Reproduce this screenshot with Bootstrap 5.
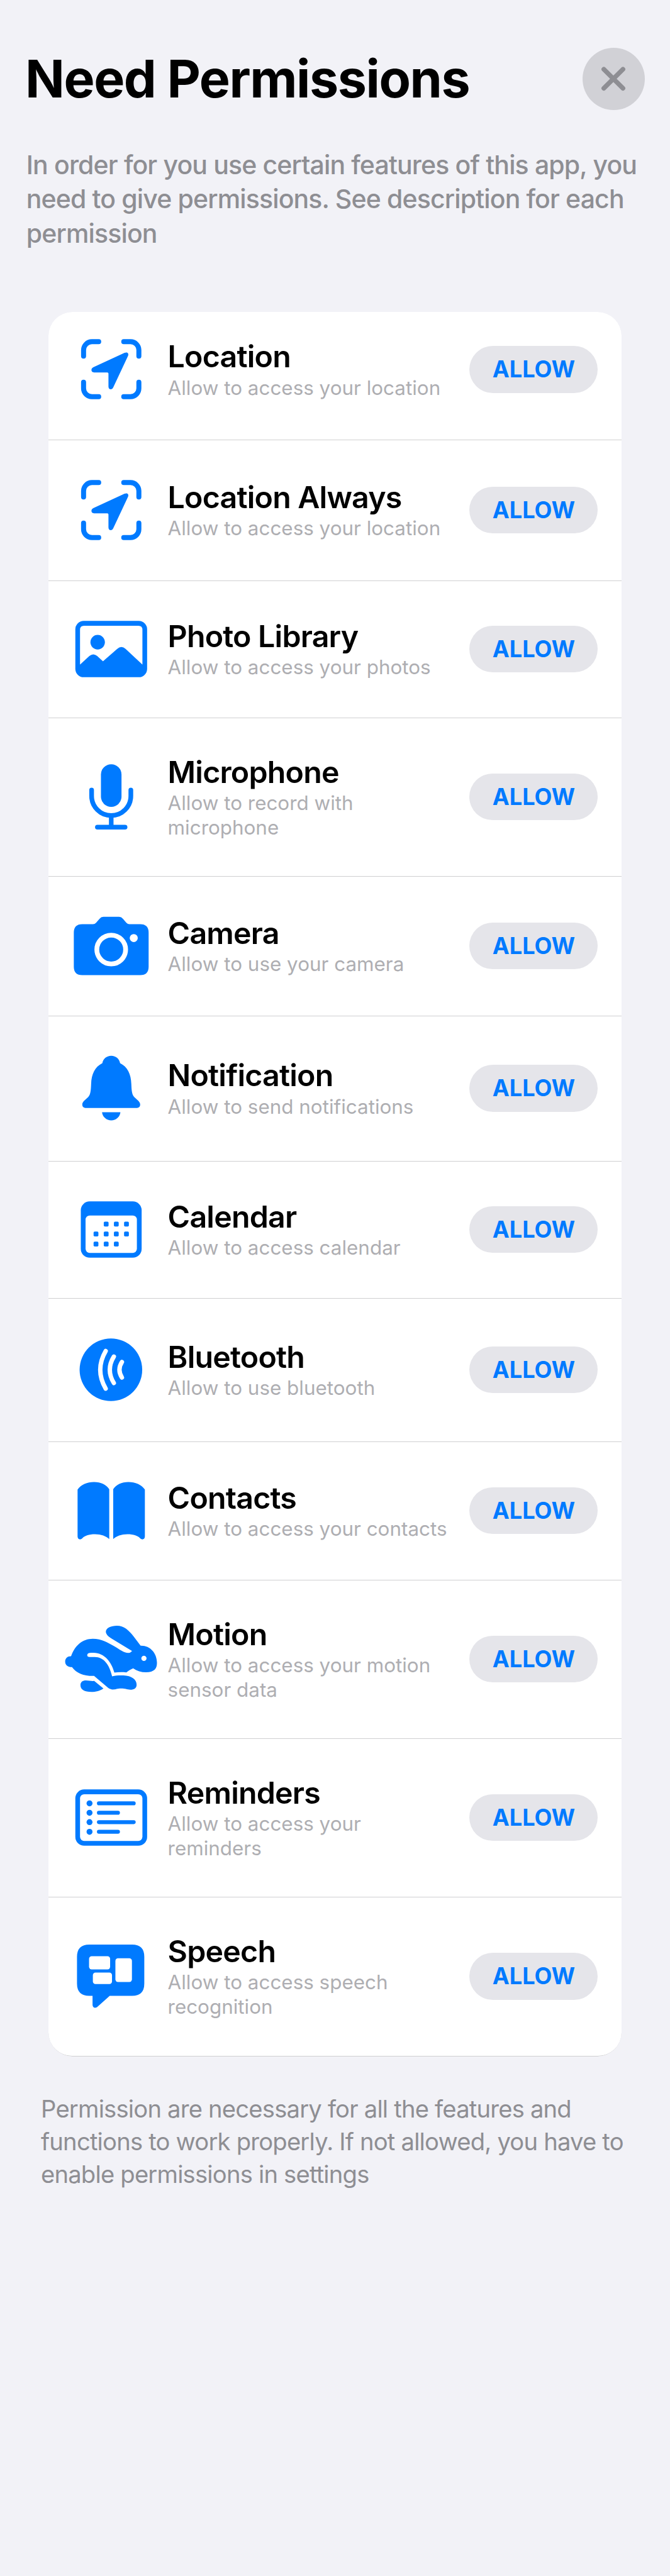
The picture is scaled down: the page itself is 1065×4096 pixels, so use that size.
<!DOCTYPE html>
<html lang="en">
<head>
<meta charset="utf-8">
<meta name="viewport" content="width=device-width, initial-scale=1">
<title>Need Permissions</title>
<link href="https://cdn.jsdelivr.net/npm/bootstrap@5.3.0/dist/css/bootstrap.min.css" rel="stylesheet">
<style>
  :root { --ios-blue: #007aff; --ios-bg: #f2f2f7; --ios-gray: #8e8e93; }
  body { background: var(--ios-bg); font-family: Inter, "Liberation Sans", sans-serif; color: #000; }
  .screen { width: 1065px; min-height: 4096px; }
  .top-bar { padding: 75.5px 40px 0 40px; }
  .page-title { font-size: 82.5px; line-height: 99.5px; font-weight: 700; letter-spacing: -1.45px; white-space: nowrap; }
  .btn-dismiss { width: 99.5px; height: 99.5px; background: #d1d1d6; --bs-btn-border-width: 0; }
  .intro { margin: 59.5px 0 0 41.8px; font-size: 41px; line-height: 54.8px; letter-spacing: -.86px; color: var(--ios-gray); font-weight: 500; height: 261px; }
  .perm-list { width: 911px; margin-left: 77px; border-radius: 38px; overflow: hidden; }
  .perm-list .list-group-item { height: 218px; padding: 0 37.6px 0 21px; border: 0; border-bottom: 1px solid #cfcfd1; background: #fff; color: #000; }
  .perm-list .h-first { height: 204px; padding-bottom: 19px; }
  .perm-list .h-220 { height: 220px; }
  .perm-list .h-222 { height: 222px; }
  .perm-list .h-224 { height: 224px; }
  .perm-list .h-228 { height: 228px; }
  .perm-list .h-231 { height: 231px; }
  .perm-list .h-252 { height: 252px; }
  .perm-list .h-last { height: 253px; }
  .perm-icon { width: 157.6px; height: 116.1px; fill: var(--ios-blue); overflow: visible; }
  .perm-icon .ln { fill: none; stroke: var(--ios-blue); stroke-linecap: round; }
  .perm-text { padding-left: 11px; }
  .perm-name { font-size: 48.3px; line-height: 58.4px; font-weight: 600; letter-spacing: -.8px; white-space: nowrap; }
  .perm-desc { font-size: 31.4px; line-height: 38.8px; letter-spacing: 0; padding-top: 1px; color: #aeaeb2; white-space: nowrap; }
  .btn-allow { width: 204px; height: 74.6px; padding: 0; border: 0; background: #e5e5ea; color: var(--ios-blue); font-size: 36.2px; line-height: 74.6px; font-weight: 700; }
  .foot-note { margin: 57px 0 0 65px; font-size: 38.2px; line-height: 52.2px; letter-spacing: -.8px; color: var(--ios-gray); white-space: nowrap; }
</style>
</head>
<body>
<main class="screen">
  <header class="top-bar d-flex justify-content-between align-items-start">
    <h1 class="page-title mb-0">Need Permissions</h1>
    <button type="button" class="btn btn-dismiss rounded-circle p-0 d-flex align-items-center justify-content-center" aria-label="Close">
      <svg width="40" height="40" viewBox="-20 -20 40 40" fill="none" stroke="#8e8e93" stroke-width="7.4" stroke-linecap="round"><path d="M-15.2-14.8 15.2 15.4M15.2-14.8-15.2 15.4"/></svg>
    </button>
  </header>
  <p class="intro mb-0">In order for you use certain features of this app, you<br>need to give permissions. See description for each<br>permission</p>

  <ul class="list-group perm-list">
    <li class="list-group-item d-flex align-items-center h-first">
      <svg class="perm-icon flex-shrink-0" viewBox="-95 -70 190 140">
        <g id="locate">
          <path class="ln" stroke-width="9.6" d="M-24-52.7H-37a16 16 0 0 0-16 16V-25M24-52.7H37a16 16 0 0 1 16 16V-25M-24 52.7H-37a16 16 0 0 1-16-16V25M24 52.7H37a16 16 0 0 0 16-16V25"/>
          <path d="M-33 6.2H-7.5Q-5.3 6.2-5.3 8.4V33C-5.3 39.5 1.5 40.5 4 34.5L32-25C34.5-30.5 31-33.7 25.5-31.3L-34.5-3.6C-39.5-1.2-39 6.2-33 6.2Z"/>
        </g>
      </svg>
      <div class="perm-text flex-grow-1"><div class="perm-name">Location</div><div class="perm-desc">Allow to access your location</div></div>
      <button type="button" class="btn btn-allow rounded-pill">ALLOW</button>
    </li>
    <li class="list-group-item d-flex align-items-center h-224">
      <svg class="perm-icon flex-shrink-0" viewBox="-95 -70 190 140"><use href="#locate"/></svg>
      <div class="perm-text flex-grow-1"><div class="perm-name">Location Always</div><div class="perm-desc">Allow to access your location</div></div>
      <button type="button" class="btn btn-allow rounded-pill">ALLOW</button>
    </li>
    <li class="list-group-item d-flex align-items-center">
      <svg class="perm-icon flex-shrink-0" viewBox="-95 -70 190 140">
        <rect x="-68.8" y="-54" width="137.6" height="108" rx="16"/>
        <path fill="#fff" d="M-59.8 29.7V-37Q-59.8-44.8-52-44.8H52Q59.8-44.8 59.8-37V29.7L27.5-.5Q19.5-7.5 11.5-.5L-15.8 23.4-27 13.2Q-34.4 7-41.8 13.2Z"/>
        <circle cx="-26" cy="-13.2" r="13.9"/>
      </svg>
      <div class="perm-text flex-grow-1"><div class="perm-name">Photo Library</div><div class="perm-desc">Allow to access your photos</div></div>
      <button type="button" class="btn btn-allow rounded-pill">ALLOW</button>
    </li>
    <li class="list-group-item d-flex align-items-center h-252">
      <svg class="perm-icon flex-shrink-0" viewBox="-95 -70 190 140">
        <rect x="-19.7" y="-62.5" width="39.4" height="81.8" rx="19.7"/>
        <path class="ln" stroke-width="9" d="M-37.6-13V-1.8A37.6 37.6 0 0 0 37.6-1.8V-13"/>
        <path d="M-4.4 38H4.4V55H-4.4Z"/>
        <rect x="-31" y="53.6" width="62" height="9" rx="4.5"/>
      </svg>
      <div class="perm-text flex-grow-1"><div class="perm-name">Microphone</div><div class="perm-desc">Allow to record with<br>microphone</div></div>
      <button type="button" class="btn btn-allow rounded-pill">ALLOW</button>
    </li>
    <li class="list-group-item d-flex align-items-center h-222">
      <svg class="perm-icon flex-shrink-0" viewBox="-95 -70 190 140">
        <path d="M-15-55.7H15Q19.5-55.7 22.5-52L29-44.5Q31.5-41.8 35-41.8H55.5Q71.7-41.8 71.7-25.6V40Q71.7 56 55.5 56H-55.5Q-71.7 56-71.7 40V-25.6Q-71.7-41.8-55.5-41.8H-35Q-31.5-41.8-29-44.5L-22.5-52Q-19.5-55.7-15-55.7Z"/>
        <circle cy="7" r="27.6" fill="none" stroke="#fff" stroke-width="9.2"/>
        <circle cx="43.2" cy="-15" r="7.7" fill="#fff"/>
      </svg>
      <div class="perm-text flex-grow-1"><div class="perm-name">Camera</div><div class="perm-desc">Allow to use your camera</div></div>
      <button type="button" class="btn btn-allow rounded-pill">ALLOW</button>
    </li>
    <li class="list-group-item d-flex align-items-center h-231">
      <svg class="perm-icon flex-shrink-0" viewBox="-95 -70 190 140">
        <path d="M0-62C9-62 15.5-56 17-47.8C31-41 38-27 38.5-8C39 4 39.5 12 44 17C49 22.5 55.5 25.5 55.5 31.5C55.5 36 52.5 38.3 47.5 38.3H-47.5C-52.5 38.3-55.5 36-55.5 31.5C-55.5 25.5-49 22.5-44 17C-39.5 12-39 4-38.5-8C-38-27-31-41-17-47.8C-15.5-56-9-62 0-62Z"/>
        <path d="M-17.6 46.5H17.6C16.5 56 9 61.9 0 61.9S-16.5 56-17.6 46.5Z"/>
      </svg>
      <div class="perm-text flex-grow-1"><div class="perm-name">Notification</div><div class="perm-desc">Allow to send notifications</div></div>
      <button type="button" class="btn btn-allow rounded-pill">ALLOW</button>
    </li>
    <li class="list-group-item d-flex align-items-center">
      <svg class="perm-icon flex-shrink-0" viewBox="-95 -70 190 140">
        <rect x="-58.3" y="-54" width="116.6" height="108" rx="17"/>
        <rect x="-49.2" y="-27" width="98.4" height="71.8" rx="8" fill="#fff"/>
        <g>
          <rect x="-14.3" y="-15" width="9.2" height="9.2" rx="2.2"/><rect x="5.1" y="-15" width="9.2" height="9.2" rx="2.2"/><rect x="24.6" y="-15" width="9.2" height="9.2" rx="2.2"/>
          <rect x="-33.8" y="4" width="9.2" height="9.2" rx="2.2"/><rect x="-14.3" y="4" width="9.2" height="9.2" rx="2.2"/><rect x="5.1" y="4" width="9.2" height="9.2" rx="2.2"/><rect x="24.6" y="4" width="9.2" height="9.2" rx="2.2"/>
          <rect x="-33.8" y="23.3" width="9.2" height="9.2" rx="2.2"/><rect x="-14.3" y="23.3" width="9.2" height="9.2" rx="2.2"/><rect x="5.1" y="23.3" width="9.2" height="9.2" rx="2.2"/>
        </g>
      </svg>
      <div class="perm-text flex-grow-1"><div class="perm-name">Calendar</div><div class="perm-desc">Allow to access calendar</div></div>
      <button type="button" class="btn btn-allow rounded-pill">ALLOW</button>
    </li>
    <li class="list-group-item d-flex align-items-center h-228">
      <svg class="perm-icon flex-shrink-0" viewBox="-95 -70 190 140">
        <circle cx="-.6" r="60"/>
        <path fill="none" stroke="#fff" stroke-width="8.4" stroke-linecap="round" d="M-10.6-36Q-31.5 0-10.6 36M5-25.3Q-10.5 0 5 25.3M20.5-14.9Q11 0 20.5 14.9"/>
      </svg>
      <div class="perm-text flex-grow-1"><div class="perm-name">Bluetooth</div><div class="perm-desc">Allow to use bluetooth</div></div>
      <button type="button" class="btn btn-allow rounded-pill">ALLOW</button>
    </li>
    <li class="list-group-item d-flex align-items-center h-220">
      <svg class="perm-icon flex-shrink-0" viewBox="-95 -70 190 140">
        <path id="page" d="M-3.8-41C-9-50-20-55-33-55S-58-50-64.5-40.5V49.5C-64.5 55.5-59 56.5-55.5 53C-51 48.5-43 45.3-31 45.3C-19.5 45.3-10 49-3.8 54.5Z"/>
        <use href="#page" transform="scale(-1 1)"/>
      </svg>
      <div class="perm-text flex-grow-1"><div class="perm-name">Contacts</div><div class="perm-desc">Allow to access your contacts</div></div>
      <button type="button" class="btn btn-allow rounded-pill">ALLOW</button>
    </li>
    <li class="list-group-item d-flex align-items-center h-252">
      <svg class="perm-icon flex-shrink-0" viewBox="-95 -70 190 140">
        <g transform="translate(-103.3 -101) scale(.3333)">
          <path d="M79 287C100 225 145 186 204 186C255 186 290 208 325 228C360 248 382 268 408 268Q420 268 430 257L308 183C292 172 279 160 279 145C280 124 308 111 343 111C382 111 412 137 440 174L479 226C533 224 573 268 573 325C573 358 558 379 510 379C482 379 458 371 436 356C420 364 408 369 397 380C372 377 350 378 328 381C311 320 272 268 208 267C186 267 172 268 172 281Q172 291 186 291H215C268 291 299 335 315 402C340 396 360 396 380 397C427 399 456 420 456 450C456 471 441 479 420 479C400 478 390 472 367 472C345 472 335 478 320 478C308 478 300 475 290 467L211 400C150 401 113 386 84 349C60 349 45 338 45 317C45 298 60 286 79 287Z"/>
          <path d="M212 429 265 472C245 487 222 492 196 492C156 492 133 479 133 453C133 435 145 426 165 426C182 427 195 430 212 429Z"/>
          <circle cx="498" cy="299" r="15" fill="#fff"/>
        </g>
      </svg>
      <div class="perm-text flex-grow-1"><div class="perm-name">Motion</div><div class="perm-desc">Allow to access your motion<br>sensor data</div></div>
      <button type="button" class="btn btn-allow rounded-pill">ALLOW</button>
    </li>
    <li class="list-group-item d-flex align-items-center h-252">
      <svg class="perm-icon flex-shrink-0" viewBox="-95 -70 190 140">
        <rect x="-68.8" y="-54" width="137.6" height="108" rx="17"/>
        <rect x="-59.8" y="-44.8" width="119.6" height="89.6" rx="8" fill="#fff"/>
        <circle cx="-41.6" cy="-27.3" r="5.7"/><circle cx="-41.6" cy="-9.2" r="5.7"/><circle cx="-41.6" cy="8.8" r="5.7"/><circle cx="-41.6" cy="27.3" r="5.7"/>
        <path class="ln" stroke-width="7.4" d="M-23.7-27.3H43.2M-23.7-9.2H13M-23.7 8.8H43.2M-23.7 27.3H13"/>
      </svg>
      <div class="perm-text flex-grow-1"><div class="perm-name">Reminders</div><div class="perm-desc">Allow to access your<br>reminders</div></div>
      <button type="button" class="btn btn-allow rounded-pill">ALLOW</button>
    </li>
    <li class="list-group-item d-flex align-items-center h-last">
      <svg class="perm-icon flex-shrink-0" viewBox="-95 -70 190 140">
        <path d="M-42-60.4H40Q63.4-60.4 63.4-37V14.5Q63.4 38 40 38H-2.9L-26.5 59C-30.5 62.5-35.8 60.5-35.8 55V38H-42Q-65.6 38-65.6 14.5V-37Q-65.6-60.4-42-60.4Z"/>
        <g fill="#fff"><rect x="-42.5" y="-38" width="40.4" height="25.3" rx="5"/><rect x="-35.2" y="-6.6" width="36.7" height="22" rx="5"/><rect x="8" y="-34" width="31.7" height="45.4" rx="5"/></g>
      </svg>
      <div class="perm-text flex-grow-1"><div class="perm-name">Speech</div><div class="perm-desc">Allow to access speech<br>recognition</div></div>
      <button type="button" class="btn btn-allow rounded-pill">ALLOW</button>
    </li>
  </ul>

  <p class="foot-note mb-0">Permission are necessary for all the features and<br>functions to work properly. If not allowed, you have to<br>enable permissions in settings</p>
</main>
<script src="https://cdn.jsdelivr.net/npm/bootstrap@5.3.0/dist/js/bootstrap.bundle.min.js"></script>
</body>
</html>
